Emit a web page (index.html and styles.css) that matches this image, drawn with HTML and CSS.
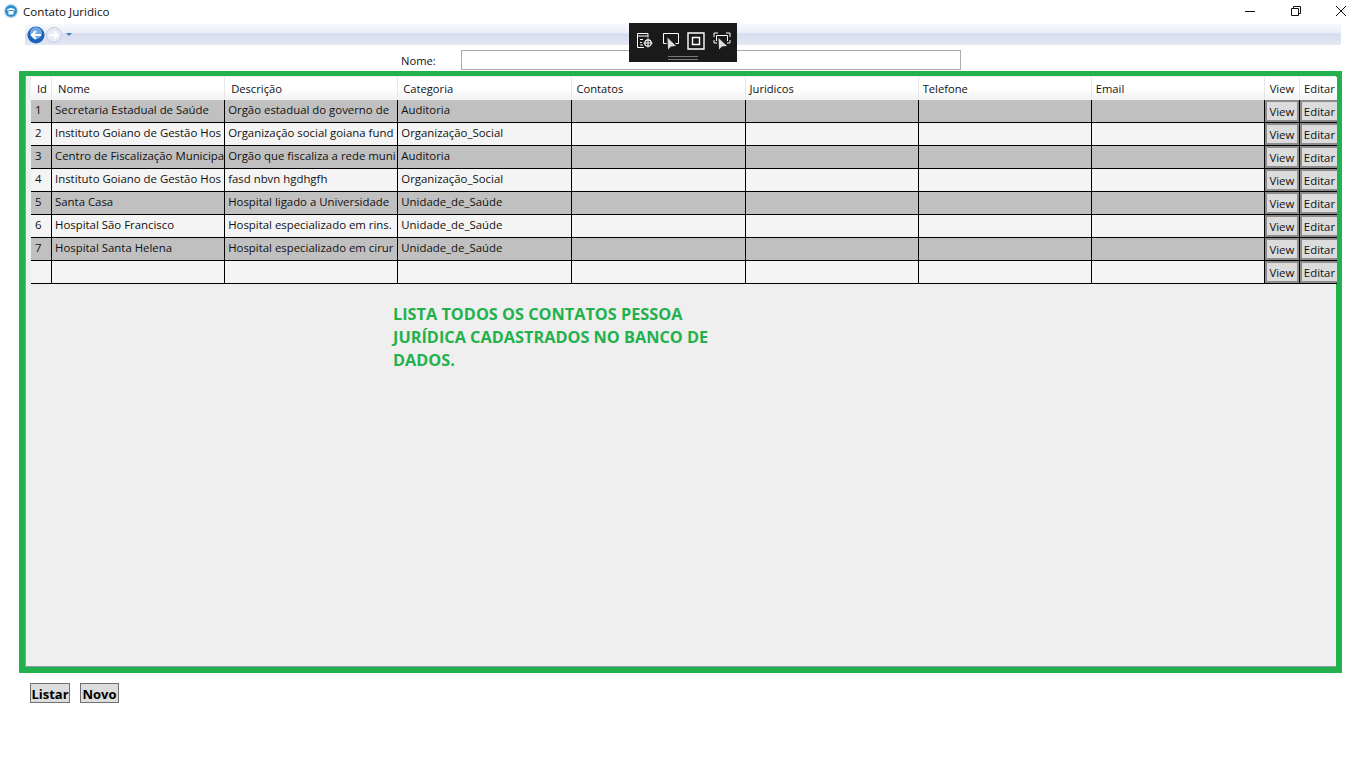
FILE: index.html
```html
<!DOCTYPE html>
<html lang="pt">
<head>
  <meta charset="UTF-8"/>
  <title>Contato Juridico</title>
  <link rel="stylesheet" href="styles.css">
</head>
<body>
  <div class="titlebar">
    <svg class="app-icon" width="16" height="16" viewBox="0 0 16 16">
      <circle cx="8" cy="8" r="7.5" fill="#d5e6f2"/>
      <circle cx="8" cy="8" r="6" fill="#2f8fc9"/>
      <path d="M4 6.5 Q8 3.5 12 6.5 L11 8 L9.8 7 L6.2 7 L5 8 Z" fill="#fff"/>
      <rect x="5.5" y="8" width="5" height="3.5" fill="#fff"/>
    </svg>
    <span class="title">Contato Juridico</span>
    <div class="window-btns">
      <svg width="12" height="12" viewBox="0 0 12 12"><path d="M1 6.5H11" stroke="#111" fill="none"/></svg>
      <svg width="12" height="12" viewBox="0 0 12 12"><path d="M1.5 3.5H8.5V10.5H1.5ZM3.5 3.5V1.5H10.5V8.5H8.5" stroke="#111" fill="none"/></svg>
      <svg width="12" height="12" viewBox="0 0 12 12"><path d="M1 1L11 11M11 1L1 11" stroke="#111" fill="none"/></svg>
    </div>
  </div>

  <div class="navbar">
    <svg width="18" height="18" viewBox="0 0 18 18">
      <circle cx="9" cy="9" r="8.5" fill="#1d62b8"/>
      <circle cx="9" cy="7" r="6" fill="#6fa8e4"/>
      <path d="M14 9H6M9 5L5 9L9 13" stroke="#fff" stroke-width="2.2" fill="none"/>
    </svg>
    <svg width="16" height="16" viewBox="0 0 16 16">
      <circle cx="8" cy="8" r="7.5" fill="#e6eaf4" stroke="#c3cbe0"/>
      <path d="M3.5 8H11M8 4.5L11.5 8L8 11.5" stroke="#fff" stroke-width="2" fill="none"/>
    </svg>
    <span class="nav-arrow"></span>
  </div>

  <div class="search-row">
    <label class="search-label" for="nome">Nome:</label>
    <input class="search-input" id="nome" type="text"/>
  </div>

  <div class="panel">
    <div class="grid-wrap">
      <table class="grid">
        <colgroup>
          <col class="c-id"/><col class="c-txt"/><col class="c-txt"/><col class="c-cat"/>
          <col class="c-txt"/><col class="c-txt"/><col class="c-txt"/><col class="c-txt"/>
          <col class="c-view"/><col class="c-edit"/>
        </colgroup>
        <thead>
          <tr>
            <th>Id</th><th>Nome</th><th>Descrição</th><th>Categoria</th><th>Contatos</th>
            <th>Juridicos</th><th>Telefone</th><th>Email</th><th class="center">View</th><th class="center">Editar</th>
          </tr>
        </thead>
        <tbody>
          <tr class="alt">
            <td>1</td><td>Secretaria Estadual de Saúde</td><td>Orgão estadual do governo de</td><td>Auditoria</td>
            <td></td><td></td><td></td><td></td><td class="act"><button>View</button></td><td class="act"><button>Editar</button></td>
          </tr>
          <tr>
            <td>2</td><td>Instituto Goiano de Gestão Hos</td><td>Organização social goiana fund</td><td>Organização_Social</td>
            <td></td><td></td><td></td><td></td><td class="act"><button>View</button></td><td class="act"><button>Editar</button></td>
          </tr>
          <tr class="alt">
            <td>3</td><td>Centro de Fiscalização Municipa</td><td>Orgão que fiscaliza a rede muni</td><td>Auditoria</td>
            <td></td><td></td><td></td><td></td><td class="act"><button>View</button></td><td class="act"><button>Editar</button></td>
          </tr>
          <tr>
            <td>4</td><td>Instituto Goiano de Gestão Hos</td><td>fasd nbvn hgdhgfh</td><td>Organização_Social</td>
            <td></td><td></td><td></td><td></td><td class="act"><button>View</button></td><td class="act"><button>Editar</button></td>
          </tr>
          <tr class="alt">
            <td>5</td><td>Santa Casa</td><td>Hospital ligado a Universidade</td><td>Unidade_de_Saúde</td>
            <td></td><td></td><td></td><td></td><td class="act"><button>View</button></td><td class="act"><button>Editar</button></td>
          </tr>
          <tr>
            <td>6</td><td>Hospital São Francisco</td><td>Hospital especializado em rins.</td><td>Unidade_de_Saúde</td>
            <td></td><td></td><td></td><td></td><td class="act"><button>View</button></td><td class="act"><button>Editar</button></td>
          </tr>
          <tr class="alt">
            <td>7</td><td>Hospital Santa Helena</td><td>Hospital especializado em cirur</td><td>Unidade_de_Saúde</td>
            <td></td><td></td><td></td><td></td><td class="act"><button>View</button></td><td class="act"><button>Editar</button></td>
          </tr>
          <tr>
            <td></td><td></td><td></td><td></td>
            <td></td><td></td><td></td><td></td><td class="act"><button>View</button></td><td class="act"><button>Editar</button></td>
          </tr>
        </tbody>
      </table>
    </div>
    <p class="note">LISTA TODOS OS CONTATOS PESSOA JURÍDICA CADASTRADOS NO BANCO DE DADOS.</p>
  </div>

  <div class="footer-btns">
    <button class="big-btn">Listar</button>
    <button class="big-btn">Novo</button>
  </div>

  <!-- floating debug toolbar -->
  <div class="toolbar">
    <div class="toolbar-icons">
      <svg width="18" height="18" viewBox="0 0 18 18" fill="none" stroke="#fff">
        <path d="M8 15.5H1.5V1.5H12V5.5M1.5 4H12"/>
        <path d="M4 7.5H7M4 10.5H6M4 13H7"/>
        <circle cx="12" cy="11" r="3.2" stroke-width="1.2"/>
        <path d="M12 6.5V15.5M7.5 11H16.5"/>
      </svg>
      <svg width="18" height="18" viewBox="0 0 18 18" fill="none" stroke="#fff">
        <path d="M4.5 11.5H1.5V1.5H16.5V11.5H13.5"/>
        <path d="M5.5 5.5L6 17.5L9 14.5L14 14Z" fill="#ddd" stroke="none"/>
      </svg>
      <svg width="18" height="18" viewBox="0 0 18 18" fill="none" stroke="#fff">
        <path d="M1 1H17V17H1Z" stroke-width="1.4"/>
        <path d="M5.5 5.5H12.5V12.5H5.5Z" stroke-width="1.4"/>
      </svg>
      <svg width="18" height="18" viewBox="0 0 18 18" fill="none" stroke="#fff">
        <path d="M1 5V1H5M13 1H17V5M1 8V11H4M17 8V11H14"/>
        <path d="M3.5 9V3.5H14.5V9"/>
        <path d="M5.5 6L6 17.5L9 14.5L14 14Z" fill="#ddd" stroke="none"/>
      </svg>
    </div>
    <div class="toolbar-grip"></div>
  </div>
</body>
</html>
```

FILE: styles.css
```css
body {
  margin: 0;
  background: #fff;
  color: #111;
  font-family: "Open Sans", "Noto Sans", sans-serif;
  font-size: 11.2px;
}

.titlebar {
  display: flex;
  align-items: center;
  height: 22px;
  padding: 0 0 2px 3px;
}
.app-icon { margin-right: 4px; }
.title { font-size: 11.6px; }
.window-btns {
  display: flex;
  gap: 33.5px;
  margin-left: auto;
  margin-right: 19px;
}

.navbar {
  display: flex;
  align-items: center;
  gap: 1px;
  height: 21px;
  margin: 0 25px;
  padding-left: 2px;
  background: linear-gradient(#f8f9fc 0, #eceef7 40%, #d6dcee 48%, #e4e8f4 100%);
}
.nav-arrow {
  margin-left: 3px;
  border-left: 3px solid transparent;
  border-right: 3px solid transparent;
  border-top: 3px solid #3f7fb8;
}

.search-row {
  display: flex;
  align-items: center;
  height: 20px;
  margin-top: 5px;
  padding-left: 401px;
}
.search-label { width: 60px; }
.search-input {
  box-sizing: border-box;
  width: 500px;
  height: 20px;
  margin: 0;
  border: 1px solid #aaa;
  background: #fff;
}

.panel {
  box-sizing: border-box;
  height: 602px;
  margin: 1px 24px 0 19px;
  padding-top: 1px;
  border: 6px solid #22b14c;
  border-top-width: 5px;
  background: #efefef;
  box-shadow: inset 1px 0 0 #8a9ab0, inset 0 -1px 0 #8a9ab0;
}
.grid-wrap {
  margin: 0 0 0 6px;
  width: 1306px;
  overflow: hidden;
}
.grid {
  table-layout: fixed;
  width: 1309px;
  border-collapse: separate;
  border-spacing: 0;
}
.c-id { width: 21px; }
.c-txt { width: 173px; }
.c-cat { width: 174px; }
.c-view { width: 35px; }
.c-edit { width: 40px; }

.grid th {
  height: 23px;
  padding: 0 0 0 6px;
  font-weight: 400;
  text-align: left;
  background: linear-gradient(#fff 0, #fff 50%, #f1f2f5 100%);
  border-right: 1px solid #e6e7ea;
  white-space: nowrap;
  overflow: hidden;
}
.grid th:nth-child(4) { padding-left: 5px; }
.grid th:nth-child(n+5) { padding-left: 4px; }
.grid th.center { text-align: center; padding: 0; }

.grid td {
  height: 23px;
  padding: 0 0 4px 3px;
  box-sizing: border-box;
  background: #f4f4f4;
  font-size: 11.4px;
  border-right: 1px solid #000;
  border-bottom: 1px solid #000;
  white-space: nowrap;
  overflow: hidden;
}
.grid td:first-child { padding-left: 4px; }
.grid tr.alt td { background: #c0c0c0; }
.grid td.act { padding: 0; }
.grid td.act button {
  display: block;
  box-sizing: border-box;
  width: 100%;
  height: 22px;
  padding: 0;
  border: 2px solid #8c8c8c;
  background: #dcdcdc;
  color: #111;
  font: inherit;
}

.note {
  width: 340px;
  margin: 19px 0 0 368px;
  color: #22b14c;
  font-size: 16.3px;
  font-weight: 700;
  line-height: 23px;
}

.footer-btns {
  display: flex;
  gap: 10px;
  margin: 10px 0 0 30px;
}
.big-btn {
  width: 40px;
  height: 20px;
  padding: 1px 0 0;
  border: 1px solid #707070;
  background: #ddd;
  color: #000;
  font: 700 13px "Open Sans", sans-serif;
}
.big-btn + .big-btn { width: 39px; }

.toolbar {
  position: absolute;
  left: 629px;
  top: 23px;
  width: 108px;
  height: 39px;
  background: #1a1a1a;
}
.toolbar-icons {
  display: flex;
  justify-content: space-between;
  padding: 9px 6px 0 7px;
}
.toolbar-grip {
  width: 30px;
  height: 2px;
  margin: 6px auto 0;
  border-top: 1px solid #777;
  border-bottom: 1px solid #777;
}
```
